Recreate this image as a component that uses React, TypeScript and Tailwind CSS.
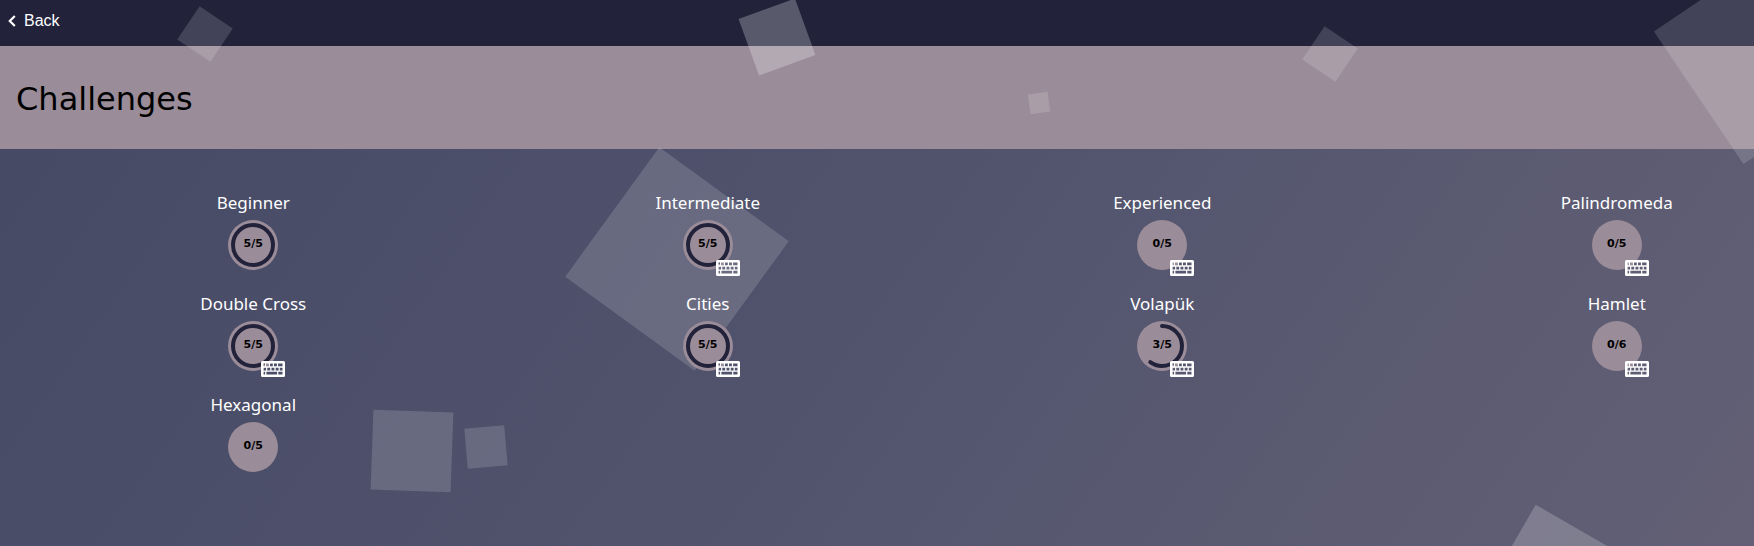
type Challenge = { name: string; done: number; total: number; keyboard: boolean };

const challenges: Challenge[] = [
  { name: 'Beginner', done: 5, total: 5, keyboard: false },
  { name: 'Intermediate', done: 5, total: 5, keyboard: true },
  { name: 'Experienced', done: 0, total: 5, keyboard: true },
  { name: 'Palindromeda', done: 0, total: 5, keyboard: true },
  { name: 'Double Cross', done: 5, total: 5, keyboard: true },
  { name: 'Cities', done: 5, total: 5, keyboard: true },
  { name: 'Volapük', done: 3, total: 5, keyboard: true },
  { name: 'Hamlet', done: 0, total: 6, keyboard: true },
  { name: 'Hexagonal', done: 0, total: 5, keyboard: false },
];

const squares = [
  'left-[185px] top-[14px] size-10 rotate-34 bg-white/15',
  'left-[747px] top-[7px] size-15 -rotate-20 bg-white/25',
  'left-[1029px] top-[93px] size-5 -rotate-8 bg-white/15',
  'left-[1310px] top-[34px] size-10 rotate-34 bg-white/15',
  'left-[1685px] top-[-27px] size-40 -rotate-34 bg-white/15',
  'left-[597px] top-[179px] size-40 rotate-36 bg-white/15',
  'left-[372px] top-[411px] size-20 rotate-2 bg-white/15',
  'left-[466px] top-[427px] size-10 -rotate-5 bg-white/15',
  'left-[1485px] top-[534px] size-40 rotate-30 bg-white/20',
];

function KeyboardIcon() {
  return (
    <svg viewBox="0 0 24 16" className="absolute -right-[7px] -bottom-[6px] h-4 w-6" aria-hidden="true">
      <path
        fill="#fff"
        fillRule="evenodd"
        d="M1.500 0h21A1.500 1.500 0 0 1 24 1.500v13a1.500 1.500 0 0 1-1.500 1.500h-21A1.500 1.500 0 0 1 0 14.500v-13A1.500 1.500 0 0 1 1.500 0z
        M2.600 2.600h1.300v2.700h-1.300z M5 2.600h2.800v2.700h-2.800z M9 2.600h2.800v2.700h-2.800z M13 2.600h2.900v2.700h-2.900z M17.100 2.600h4.400v2.700h-4.400z
        M2.600 6.700h2.500v2.700h-2.500z M6.300 6.700h2.900v2.700h-2.900z M10.500 6.700h2.900v2.700h-2.900z M14.700 6.700h2.900v2.700h-2.900z M18.800 6.700h2.700v2.700h-2.700z
        M2.600 10.700h1.500v2.700h-1.500z M5.400 10.700h10.700v2.700h-10.700z M17.300 10.700h4.200v2.700h-4.200z"
      />
    </svg>
  );
}

function Progress({ done, total }: { done: number; total: number }) {
  return (
    <svg viewBox="0 0 50 50" className="absolute inset-0 size-full -rotate-90" aria-hidden="true">
      {done > 0 && (
        <circle
          cx="25"
          cy="25"
          r="20"
          fill="none"
          stroke="#22223b"
          strokeWidth="4"
          strokeLinecap="round"
          pathLength={100}
          strokeDasharray={`${(done / total) * 100} 100`}
        />
      )}
    </svg>
  );
}

export default function App() {
  return (
    <div className="relative min-h-screen overflow-hidden bg-[linear-gradient(125deg,#454963_0%,#52546e_53%,#636075_100%)] font-['DejaVu_Sans',Verdana,sans-serif]">
      <header className="flex h-[46px] items-center bg-[#22223b] px-2 pb-1">
        <a href="#" className="flex items-center gap-2 font-['Liberation_Sans',Arial,sans-serif] text-base text-white">
          <svg viewBox="0 0 8 12" className="h-3 w-2" fill="none" stroke="#fff" strokeWidth="2.200" aria-hidden="true">
            <path d="M6.800 1L1.800 6l5 5" />
          </svg>
          Back
        </a>
      </header>
      <div className="flex h-[103px] items-center bg-[#9a8c98] px-4 pt-0.5">
        <h1 className="text-[32px] leading-10 text-black">Challenges</h1>
      </div>
      <div className="pointer-events-none absolute inset-0" aria-hidden="true">
        {squares.map((square) => (
          <div key={square} className={`absolute ${square}`} />
        ))}
      </div>
      <main className="relative pt-[41px] pl-29">
        <ul className="grid grid-cols-4 gap-x-45 gap-y-[21px]">
          {challenges.map((c) => (
            <li key={c.name} className="flex justify-center">
              <a href="#" className="flex flex-col items-center gap-1">
                <span className="font-['Noto_Sans',Verdana,sans-serif] text-[17px] leading-[26px] whitespace-nowrap text-white">
                  {c.name}
                </span>
                <span className="relative flex size-[50px] items-center justify-center rounded-full bg-[#9a8c98]">
                  <Progress done={c.done} total={c.total} />
                  <span className="relative pb-0.5 text-[11px] leading-4 font-bold text-black">
                    {c.done}/{c.total}
                  </span>
                  {c.keyboard && <KeyboardIcon />}
                </span>
              </a>
            </li>
          ))}
        </ul>
      </main>
    </div>
  );
}
